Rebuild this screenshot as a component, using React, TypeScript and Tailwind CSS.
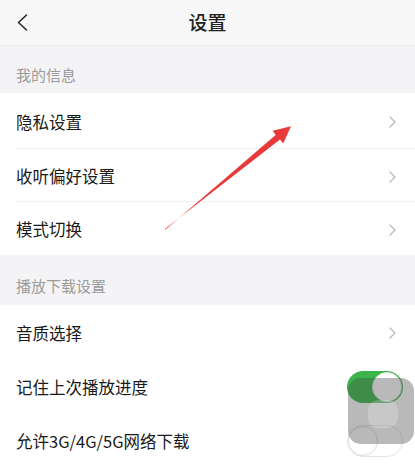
import React from "react";

const font = { fontFamily: '"Noto Sans CJK SC", "Noto Sans", sans-serif' };

function ChevronRight() {
  return (
    <svg width="7" height="12" viewBox="0 0 7 12" className="shrink-0">
      <path d="M1 1 L6 6 L1 11" fill="none" stroke="#b8b8b8" strokeWidth="1.2" strokeLinecap="round" strokeLinejoin="round" />
    </svg>
  );
}

function Section({ title, h }: { title: string; h: string }) {
  return (
    <div className={`${h} bg-[#f4f4f6] flex items-center pt-[12px] pl-4 text-[15px] text-[#9b9b9b]`}>
      {title}
    </div>
  );
}

function NavRow({ label, h, border }: { label: string; h: string; border?: boolean }) {
  return (
    <div className={`${h} bg-white flex items-center pt-[2px] ${border ? "relative" : ""}`}>
      <span className="pl-4 text-[16.5px] text-[#1a1a1a] flex-1">{label}</span>
      <span className="mr-[19px]">
        <ChevronRight />
      </span>
      {border && <div className="absolute left-4 right-0 bottom-0 h-px bg-[#f1f1f1]" />}
    </div>
  );
}

function Toggle({ on }: { on: boolean }) {
  return on ? (
    <div className="w-[56px] h-[32px] rounded-full bg-[#3bb54a] flex items-center justify-end p-[1px]">
      <div className="w-[30px] h-[30px] rounded-full bg-white border border-[#e5e5e5]" />
    </div>
  ) : (
    <div className="w-[56px] h-[32px] rounded-full bg-white border-[1.5px] border-[#e4e4e4] flex items-center justify-start">
      <div className="w-[30px] h-[30px] rounded-full bg-white border-[1.5px] border-[#dedede]" />
    </div>
  );
}

function ToggleRow({ label, on, h }: { label: string; on: boolean; h: string }) {
  return (
    <div className={`${h} bg-white flex items-center pt-[2px]`}>
      <span className="pl-4 text-[16.5px] text-[#1a1a1a] flex-1">{label}</span>
      <span className="mr-[12px]">
        <Toggle on={on} />
      </span>
    </div>
  );
}

export default function App() {
  return (
    <div className="relative w-[415px] h-[466px] overflow-hidden bg-white" style={font}>
      {/* Header */}
      <div className="h-[46px] bg-[#f7f7f7] border-b border-[#ececec] flex items-center relative">
        <div className="pl-[17px] flex items-center">
          <svg width="11" height="17" viewBox="0 0 11 17">
            <path d="M9.5 1 L1.5 8.5 L9.5 16" fill="none" stroke="#2a2a2a" strokeWidth="1.6" strokeLinecap="round" strokeLinejoin="round" />
          </svg>
        </div>
        <div className="absolute inset-0 flex items-center justify-center text-[19px] font-medium text-[#222]">
          设置
        </div>
      </div>

      <Section title="我的信息" h="h-[47px]" />
      <NavRow label="隐私设置" h="h-[56px]" border />
      <NavRow label="收听偏好设置" h="h-[53px]" border />
      <NavRow label="模式切换" h="h-[53px]" />

      <Section title="播放下载设置" h="h-[50px]" />
      <NavRow label="音质选择" h="h-[54px]" />
      <ToggleRow label="记住上次播放进度" on h="h-[54px]" />
      <ToggleRow label="允许3G/4G/5G网络下载" on={false} h="h-[54px]" />

      {/* Floating assistive touch overlay */}
      <div className="absolute left-[348px] top-[378px] w-[66px] h-[66px] rounded-[13px] bg-[rgba(70,70,70,0.38)]">
        <div className="absolute left-[20px] top-[22px] w-[30px] h-[28px] rounded-[10px] bg-[rgba(255,255,255,0.22)]" />
      </div>

      {/* Red annotation arrow */}
      <svg className="absolute left-0 top-0 pointer-events-none" width="415" height="466" viewBox="0 0 415 466">
        <polygon
          points="164.3,229.6 166,229.2 275.6,134.9 272.6,130.8 291,126.3 283.2,143.6 280,139.6"
          fill="#e93a3b"
        />
      </svg>
    </div>
  );
}
